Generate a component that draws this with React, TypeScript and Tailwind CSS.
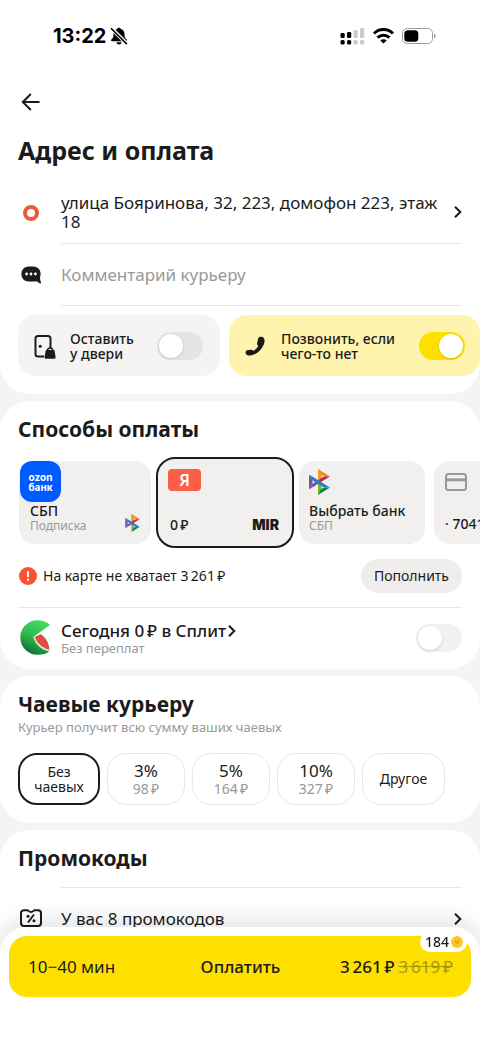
import { useState } from 'react';
import type { ReactNode } from 'react';
import { clsx } from 'clsx';

// narrow no-break space before the currency sign
const RUB = '\u202f₽';

const tips = [
  { id: '3', label: '3%', amount: 98 },
  { id: '5', label: '5%', amount: 164 },
  { id: '10', label: '10%', amount: 327 },
];

function StatusBar() {
  return (
    <div className="flex h-[72px] items-center justify-between pl-[53px] pr-11">
      <div className="flex items-center gap-1 text-black">
        <span className="font-['Inter',sans-serif] text-xl font-bold">13:22</span>
        <svg className="size-[18px]" viewBox="0 0 18 18" fill="currentColor">
          <path d="M9 .8c-1 0-1.700.6-1.900 1.300C4.600 2.800 3.500 4.800 3.500 7.200c0 2.900-.6 3.900-2 5.100-.8.800-.5 2 .7 2h13.600c1.200 0 1.500-1.200.7-2-1.400-1.200-2-2.200-2-5.100 0-2.400-1.100-4.400-3.600-5.100C10.700 1.400 10 .8 9 .8z" />
          <path d="M6.500 15.200h5c-.2 1.300-1.200 2.300-2.500 2.300s-2.300-1-2.500-2.300z" />
          <path d="M1.300 1.200 17 17" stroke="white" strokeWidth="3.800" />
          <path d="M1 1.200 16.900 17.100" stroke="currentColor" strokeWidth="1.500" />
        </svg>
      </div>
      <div className="flex items-center gap-2">
        <svg className="h-[18px] w-[25px]" viewBox="0 0 25 18">
          <g fill="#000">
            <rect x="0.500" y="6" width="4.200" height="5" rx="1.300" />
            <rect x="7" y="5" width="4.200" height="6" rx="1.300" />
            <rect x="0.500" y="13" width="4.200" height="4.400" rx="1.500" />
            <rect x="7" y="13" width="4.200" height="4.400" rx="1.500" />
          </g>
          <g fill="#cbcbcb">
            <rect x="13.500" y="3" width="4.200" height="8" rx="1.300" />
            <rect x="20" y="1" width="4.200" height="10" rx="1.300" />
            <rect x="13.500" y="13" width="4.200" height="4.400" rx="1.500" />
            <rect x="20" y="13" width="4.200" height="4.400" rx="1.500" />
          </g>
        </svg>
        <svg className="h-4 w-[21px]" viewBox="0 0 21 16" fill="none" stroke="#000" strokeWidth="3">
          <path d="M1 5.500a13.500 13.500 0 0 1 19 0" />
          <path d="M4.600 9.600a8.400 8.400 0 0 1 11.800 0" />
          <path d="M10.500 15.500 7.300 12.600a4.600 4.600 0 0 1 6.400 0z" fill="#000" stroke="none" />
        </svg>
        <svg className="h-4 w-[34px]" viewBox="0 0 34 16">
          <rect x="0.500" y="0.500" width="30" height="15" rx="4.800" fill="none" stroke="#9b9b9b" />
          <rect x="2.300" y="2.300" width="14" height="11.400" rx="3.500" />
          <path d="M32 5.500c1 .4 1.600 1.400 1.600 2.500s-.6 2.100-1.600 2.500z" fill="#9b9b9b" />
        </svg>
      </div>
    </div>
  );
}

function Chevron() {
  return (
    <svg className="h-3 w-2 shrink-0" viewBox="0 0 8 12" fill="none" stroke="#1b1b1b" strokeWidth="2">
      <path d="M1 0.800 6.300 6 1 11.200" />
    </svg>
  );
}

function SbpLogo({ className }: { className?: string }) {
  return (
    <svg className={className} viewBox="0 0 21 26">
      <path d="M9 0 21 7.500H15L12.500 5.900V9.500L9 11.500z" fill="#f18a22" />
      <path d="M9 0 12.500 5.900V9.200L9 11.200z" fill="#f0a020" />
      <path d="M21 7.500 9.500 14.500 9 11.300 15 7.500z" fill="#cf2050" />
      <path d="M9 26V13l3.500 3.500v3.600z" fill="#74b72b" />
      <path d="M9 26 21 18.500H15L12 20.300z" fill="#0b8244" />
      <path d="M0 5.500 3.500 11v4L0 20.500z" fill="#6a58a8" />
      <path d="M0 20.500 10 14.300 7 12.600 3.300 15z" fill="#8a4a9c" />
      <path d="M0 5.500 21 18.500H15L3.300 11.200z" fill="#1d83c4" />
    </svg>
  );
}

function Toggle({ id, checked, onChange, light, label }: {
  id: string;
  checked: boolean;
  onChange: (value: boolean) => void;
  light?: boolean;
  label?: string;
}) {
  return (
    <input
      id={id}
      type="checkbox"
      role="switch"
      aria-label={label}
      checked={checked}
      onChange={(e) => onChange(e.target.checked)}
      className={clsx(
        'h-7 w-[46px] shrink-0 cursor-pointer appearance-none rounded-full p-0.5 transition-colors',
        "before:block before:size-6 before:rounded-full before:bg-white before:shadow-[0_1px_3px_rgba(0,0,0,0.15)] before:transition-transform before:content-['']",
        'checked:bg-[#fde000] checked:before:translate-x-[18px]',
        light ? 'bg-[#f1f1f0]' : 'bg-[#e6e5e3]',
      )}
    />
  );
}

function Section({ title, className, children }: { title: string; className?: string; children: ReactNode }) {
  return (
    <section className={clsx('bg-white px-[18px] pt-[14px]', className)}>
      <h2 className="text-[21px] leading-7 font-bold">{title}</h2>
      {children}
    </section>
  );
}

export default function App() {
  const [comment, setComment] = useState('');
  const [leaveAtDoor, setLeaveAtDoor] = useState(false);
  const [callMe, setCallMe] = useState(true);
  const [split, setSplit] = useState(false);
  const [method, setMethod] = useState('yandex');
  const [tip, setTip] = useState('none');

  const cardClass = (id: string) =>
    clsx(
      'relative flex shrink-0 flex-col bg-[#f1f0ef] text-left',
      method === id ? '-mx-1 h-[91px] rounded-[19px] border-2 border-[#1b1b1b]' : 'h-[83px] rounded-2xl',
    );

  const tipClass = (id: string) =>
    clsx(
      'flex h-[52px] shrink-0 flex-col items-center justify-center rounded-[19px]',
      tip === id ? 'border-2 border-[#1b1b1b]' : 'border border-[#e6e6e6]',
    );

  return (
    <div className="flex min-h-screen flex-col gap-[7px] overflow-x-hidden bg-[#f4f4f2] font-['Noto_Sans',sans-serif] text-[#1b1b1b]">
      <section className="rounded-b-[30px] bg-white pb-[18px]">
        <StatusBar />
        <button type="button" aria-label="Назад" className="ml-[21px] mt-5 block">
          <svg className="size-5" viewBox="0 0 20 20" fill="none" stroke="currentColor" strokeWidth="2">
            <path d="M18.500 10H2M9.800 2 1.800 10l8 8" />
          </svg>
        </button>
        <h1 className="mt-5 px-[18px] text-[25px] leading-9 font-bold">Адрес и оплата</h1>

        <div className="mt-[13px] px-[18px]">
          <button type="button" className="flex w-full items-center text-left">
            <span className="flex w-[43px] shrink-0 pl-[5px]">
              <span className="size-4 rounded-full border-4 border-[#ea5a3c]" />
            </span>
            <span className="flex flex-1 items-center justify-between border-b border-[#e7e7e7] py-3">
              <span className="text-[17px] leading-[19px]">улица Бояринова, 32, 223, домофон 223, этаж 18</span>
              <Chevron />
            </span>
          </button>
          <div className="flex items-center">
            <label htmlFor="comment" className="w-[43px] shrink-0 pl-[3px]" aria-label="Комментарий">
              <svg className="h-[18px] w-5" viewBox="0 0 20 18">
                <path d="M8 .5h4c4.500 0 7.600 2.900 7.600 7.300 0 1.900-.6 3.300-.6 4.600 0 1.700 1 3.200 1 4.700 0 .5-.4.600-.9.300l-3.600-2.200c-1 .2-2.200.3-3.500.3H8C3.400 15.500.4 12.500.4 8S3.400.5 8 .5z" fill="#1b1b1b" />
                <circle cx="5.600" cy="8" r="1.400" fill="#fff" />
                <circle cx="10" cy="8" r="1.400" fill="#fff" />
                <circle cx="14.400" cy="8" r="1.400" fill="#fff" />
              </svg>
            </label>
            <input
              id="comment"
              type="text"
              value={comment}
              onChange={(e) => setComment(e.target.value)}
              placeholder="Комментарий курьеру"
              className="h-[62px] min-w-0 flex-1 border-b border-[#e7e7e7] text-[17px] outline-none placeholder:text-[#999]"
            />
          </div>
        </div>

        <div className="mt-[9px] flex gap-[9px] pl-[18px]">
          <label htmlFor="door" className="flex h-[61px] w-[202px] shrink-0 items-center rounded-[18px] bg-[#f5f4f2] pr-[17px] pl-4">
            <svg className="mt-0.5 h-6 w-[22px] shrink-0" viewBox="0 0 22 24">
              <rect x="1.500" y="1" width="15" height="20.500" rx="2.500" fill="none" stroke="#1b1b1b" strokeWidth="2" />
              <circle cx="6.200" cy="11.300" r="1.500" fill="#1b1b1b" />
              <path d="M10 24.500 10.500 13h10.500v10z" fill="#f5f4f2" />
              <path d="M13.500 15.500a2.600 2.600 0 0 1 5.200 0" fill="none" stroke="#1b1b1b" strokeWidth="1.500" />
              <path d="M12.600 15h7a1 1 0 0 1 1 .8l1 6.500c.1.900-.4 1.500-1.200 1.500h-8.600c-.8 0-1.300-.6-1.200-1.500l1-6.500a1 1 0 0 1 1-.8z" fill="#1b1b1b" />
            </svg>
            <span className="ml-[14px] flex-1 text-sm leading-[15px] font-medium">Оставить<br />у двери</span>
            <Toggle id="door" checked={leaveAtDoor} onChange={setLeaveAtDoor} />
          </label>
          <label htmlFor="call" className="flex h-[61px] flex-1 items-center rounded-[18px] bg-[#fef4ae] pr-[15px] pl-4">
            <svg className="size-5 shrink-0" viewBox="0 0 20 20">
              <path d="M13.200 2.500c.4-1.600 2-2.200 3.600-1.700 2 .6 2.900 2 2.800 4.200-.2 3-1.700 6.200-4.300 9-2.900 3.100-6.300 5.100-9.600 5.500-2.500.3-4.300-.2-4.900-2-.5-1.600.1-3 1.700-3.300l3-.5c1.200-.2 1.800.1 2.600.8.3.3.6.3 1 0 1.500-1 2.900-2.400 3.900-3.900.2-.4.2-.7-.1-1-.7-.7-1-1.400-.8-2.500z" fill="#1b1b1b" />
            </svg>
            <span className="ml-4 flex-1 text-sm leading-[15px] font-medium">Позвонить, если<br />чего-то нет</span>
            <Toggle id="call" checked={callMe} onChange={setCallMe} />
          </label>
        </div>
      </section>

      <Section title="Способы оплаты" className="rounded-[30px] pb-[14px]">
        <div className="-mr-[18px] mt-[13px] ml-px flex h-[93px] items-center gap-[9px] overflow-hidden">
          <button type="button" onClick={() => setMethod('ozon')} className={clsx(cardClass('ozon'), 'w-[132px]')}>
            <span className="ml-px flex size-[41px] flex-col items-center justify-center rounded-xl bg-[#005bff] font-['Inter',sans-serif] text-[10px] leading-[10px] font-bold text-white">
              <span>ozon</span>
              <span>банк</span>
            </span>
            <span className="flex w-full items-end justify-between px-[11px]">
              <span>
                <span className="block text-sm leading-[17px] font-medium">СБП</span>
                <span className="block text-xs leading-[13px] text-[#999]">Подписка</span>
              </span>
              <SbpLogo className="h-[18px] w-[15px]" />
            </span>
          </button>
          <button type="button" onClick={() => setMethod('yandex')} className={clsx(cardClass('yandex'), 'w-[138px] justify-between pt-[10px] pr-[13px] pb-3 pl-[10px]')}>
            <span className="flex h-[22px] w-[33px] items-center justify-center rounded bg-[#fb5f47] text-base font-semibold text-white">Я</span>
            <span className="flex w-full items-center justify-between">
              <span className="pl-0.5 text-sm leading-[18px] font-medium">0{RUB}</span>
              <span className="font-['Inter',sans-serif] text-sm leading-[18px] font-black">MIR</span>
            </span>
          </button>
          <button type="button" onClick={() => setMethod('sbp')} className={clsx(cardClass('sbp'), 'w-[126px] justify-between pt-2 pb-3 pl-[10px]')}>
            <SbpLogo className="h-[26px] w-[21px]" />
            <span>
              <span className="block text-sm leading-[17px] font-medium">Выбрать банк</span>
              <span className="block text-xs leading-[13px] text-[#999]">СБП</span>
            </span>
          </button>
          <button type="button" onClick={() => setMethod('card')} className={clsx(cardClass('card'), 'w-[132px] justify-between pt-3 pb-[11px] pl-[11px]')}>
            <svg className="h-[18px] w-[22px]" viewBox="0 0 22 18" fill="none" stroke="#999" strokeWidth="2">
              <rect x="1" y="1" width="20" height="16" rx="2.500" />
              <path d="M1 6.800h20" strokeWidth="3" />
            </svg>
            <span className="text-sm leading-[18px] font-medium">· 7041</span>
          </button>
        </div>

        <div className="mt-[10px] flex items-center justify-between pb-[14px]">
          <div className="flex items-center">
            <svg className="mr-[6px] ml-px size-[18px]" viewBox="0 0 18 18">
              <circle cx="9" cy="9" r="9" fill="#f9522f" />
              <path d="M9 4.300v5.700M9 11.700v2" stroke="#fff" strokeWidth="2" />
            </svg>
            <span className="text-sm">На карте не хватает 3{'\u202f'}261{RUB}</span>
          </div>
          <button type="button" className="h-[34px] rounded-full bg-[#efeeec] px-[13px] text-sm">Пополнить</button>
        </div>

        <div className="flex items-center border-t border-[#e7e7e7] pt-3">
          <svg className="mr-[11px] ml-0.5 h-[35px] w-[30px] shrink-0" viewBox="0 0 30 35">
            <defs>
              <linearGradient id="melon" x1="0.700" y1="0" x2="0.300" y2="1">
                <stop offset="0" stopColor="#44e05c" />
                <stop offset="0.550" stopColor="#2cb44c" />
                <stop offset="1" stopColor="#0b6a34" />
              </linearGradient>
            </defs>
            <path d="M30 5C26.500 1.800 22.500.3 17.500.3 8 .3.300 8 .300 17.500S8 34.800 17.500 34.800c5 0 9-1.200 11.500-3L13.500 16.800z" fill="url(#melon)" />
            <path d="M13.500 16.800 21 14C27 19 30.500 26 29.500 31.500 22 30.500 14.500 24 13.500 16.800z" fill="#c8f3cf" />
            <path d="M15 16.800 21 14.200C26.500 18.500 29.500 24 29 29.800 22.500 28 16.500 23 15 16.800z" fill="#e34a42" />
          </svg>
          <div className="flex-1">
            <a href="#split" className="flex items-center gap-0.5 text-[17px] leading-[21px] font-medium">
              Сегодня 0{RUB} в Сплит
              <Chevron />
            </a>
            <p className="text-[13px] leading-[14px] text-[#999]">Без переплат</p>
          </div>
          <Toggle id="split-toggle" label="Сплит" light checked={split} onChange={setSplit} />
        </div>
      </Section>

      <Section title="Чаевые курьеру" className="rounded-[30px] pb-[18px]">
        <p className="text-[13px] leading-[18px] text-[#999]">Курьер получит всю сумму ваших чаевых</p>
        <div className="mt-[17px] flex gap-[7px]">
          <button type="button" onClick={() => setTip('none')} className={clsx(tipClass('none'), 'w-[82px] text-sm')}>
            <span className="leading-[15px]">Без</span>
            <span className="leading-[15px]">чаевых</span>
          </button>
          {tips.map((item) => (
            <button key={item.id} type="button" onClick={() => setTip(item.id)} className={clsx(tipClass(item.id), 'w-[78px]')}>
              <span className="text-[17px] leading-[18px]">{item.label}</span>
              <span className="text-sm leading-[17px] text-[#999]">{item.amount}{RUB}</span>
            </button>
          ))}
          <button type="button" onClick={() => setTip('other')} className={clsx(tipClass('other'), 'w-[83px] text-sm')}>
            Другое
          </button>
        </div>
      </Section>

      <Section title="Промокоды" className="flex-1 rounded-t-[30px] pb-[80px]">
        <button type="button" className="mt-[15px] flex w-full items-center text-left">
          <span className="w-[43px] shrink-0 pl-0.5">
            <svg className="h-[18px] w-[22px]" viewBox="0 0 22 18" fill="none" stroke="#1b1b1b" strokeWidth="2">
              <path d="M4 1.200h3.500c1 0 1.200 1.800 3.500 1.800s2.500-1.800 3.500-1.800H18a3 3 0 0 1 3 3V14a3 3 0 0 1-3 3H4a3 3 0 0 1-3-3V4.200a3 3 0 0 1 3-3z" />
              <path d="M14 5.500 8 13.500" strokeWidth="1.800" />
              <circle cx="8" cy="7.300" r="1.500" fill="#1b1b1b" stroke="none" />
              <circle cx="14" cy="11.800" r="1.500" fill="#1b1b1b" stroke="none" />
            </svg>
          </span>
          <span className="flex h-[62px] flex-1 items-center justify-between border-t border-[#e7e7e7] text-[17px]">
            У вас 8 промокодов
            <Chevron />
          </span>
        </button>
      </Section>

      <footer className="fixed inset-x-0 bottom-0 rounded-t-[26px] bg-white px-[9px] pt-[9px] pb-[46px] shadow-[0_-6px_24px_rgba(0,0,0,0.12)]">
        <button type="button" className="relative grid h-[61px] w-full grid-cols-3 items-center rounded-[18px] bg-[#fde000] pr-[18px] pl-[19px] text-[17px]">
          <span className="text-left">10−40 мин</span>
          <span className="text-center font-medium">Оплатить</span>
          <span className="flex justify-end gap-1 whitespace-nowrap">
            <span className="font-medium">3{'\u202f'}261{RUB}</span>
            <s className="text-[#a8950f]">3{'\u202f'}619{RUB}</s>
          </span>
          <span className="absolute -top-1 right-1 flex h-5 items-center gap-0.5 rounded-full bg-white pr-1 pl-[5px] text-sm font-medium">
            184
            <svg className="size-3" viewBox="0 0 12 12">
              <circle cx="6" cy="6" r="6" fill="#fcc928" />
              <path d="M3.300 4.300c1-.8 2-.4 2.700.4.700-.8 1.700-1.200 2.700-.4 0 2-1 3.600-2.700 4-1.700-.4-2.700-2-2.700-4z" fill="#f5a51d" />
            </svg>
          </span>
        </button>
      </footer>
    </div>
  );
}
